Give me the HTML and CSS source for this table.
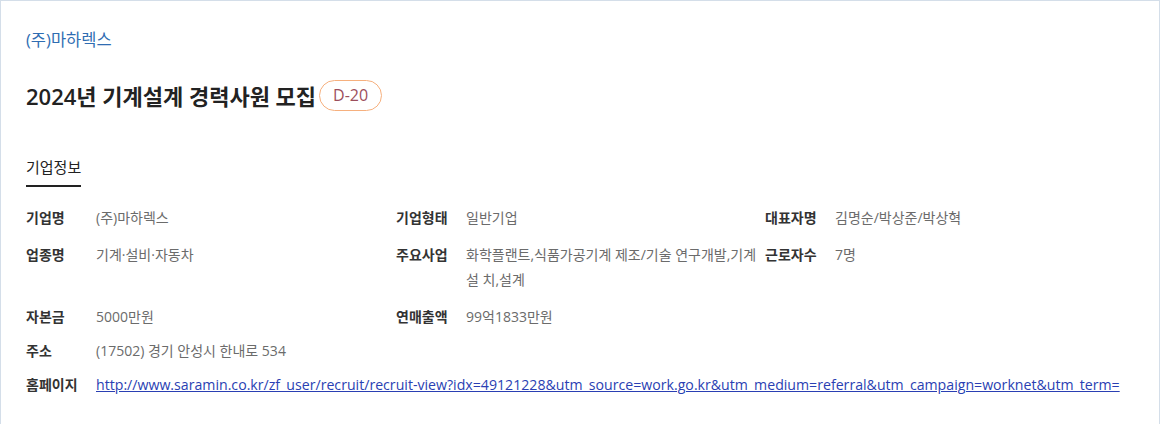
FILE: index.html
```html
<!DOCTYPE html>
<html lang="ko">
<head>
<meta charset="utf-8">
<title>2024년 기계설계 경력사원 모집</title>
<link rel="stylesheet" href="styles.css">
</head>
<body>
<div class="card">
  <div class="company">(주)마하렉스</div>
  <div class="title-row">
    <h1 class="title">2024년 기계설계 경력사원 모집</h1>
    <span class="badge">D-20</span>
  </div>
  <div class="tabs">
    <span class="tab">기업정보</span>
  </div>
  <div class="info-grid">
    <div class="item"><span class="label">기업명</span><span class="value">(주)마하렉스</span></div>
    <div class="item"><span class="label">기업형태</span><span class="value">일반기업</span></div>
    <div class="item"><span class="label">대표자명</span><span class="value">김명순/박상준/박상혁</span></div>
    <div class="item"><span class="label">업종명</span><span class="value">기계·설비·자동차</span></div>
    <div class="item"><span class="label">주요사업</span><span class="value">화학플랜트,식품가공기계 제조/기술 연구개발,기계설 치,설계</span></div>
    <div class="item"><span class="label">근로자수</span><span class="value">7명</span></div>
    <div class="item"><span class="label">자본금</span><span class="value">5000만원</span></div>
    <div class="item"><span class="label">연매출액</span><span class="value">99억1833만원</span></div>
  </div>
  <div class="item full"><span class="label">주소</span><span class="value">(17502) 경기 안성시 한내로 534</span></div>
  <div class="item full"><span class="label">홈페이지</span><span class="value"><a class="link" href="#">http://www.saramin.co.kr/zf_user/recruit/recruit-view?idx=49121228&amp;utm_source=work.go.kr&amp;utm_medium=referral&amp;utm_campaign=worknet&amp;utm_term=</a></span></div>
</div>
</body>
</html>
```

FILE: styles.css
```css
html, body {
  margin: 0;
  padding: 0;
  height: 100%;
  overflow: hidden;
  background: #ffffff;
}

body {
  font-family: "Open Sans", "Noto Sans CJK KR", sans-serif;
  color: #222222;
}

.card {
  box-sizing: border-box;
  height: 100%;
  border: 1px solid #d4dee9;
  border-bottom: 0;
  padding: 28px 24px 0 25px;
}

.company {
  font-size: 16.5px;
  line-height: 22px;
  color: #2f6db2;
}

.title-row {
  display: flex;
  align-items: center;
  gap: 3px;
  margin-top: 29px;
}

.title {
  margin: 0;
  font-size: 22px;
  line-height: 30px;
  font-weight: 600;
  color: #222222;
}

.badge {
  box-sizing: border-box;
  height: 31px;
  padding: 0 13px;
  border: 1px solid #f6b07e;
  border-radius: 16px;
  font-size: 16px;
  line-height: 29px;
  color: #9c4e5c;
}

.tabs {
  display: flex;
  margin-top: 46px;
}

.tab {
  font-size: 15px;
  line-height: 20px;
  padding-bottom: 8px;
  border-bottom: 2px solid #222222;
  color: #222222;
}

.info-grid {
  display: grid;
  grid-template-columns: 370px 369px 1fr;
  row-gap: 12px;
  margin-top: 18px;
}

.item {
  display: flex;
  font-size: 14px;
  line-height: 25px;
}

.item.full {
  margin-top: 9px;
}

.label {
  flex: 0 0 70px;
  font-weight: 700;
  color: #333333;
}

.value {
  flex: 1 1 auto;
  width: 300px;
  color: #6b6b6b;
}

.item.full .value {
  width: auto;
  white-space: nowrap;
}

.link {
  font-size: 14.15px;
  color: #2a3fb3;
  text-decoration: underline;
}
```
